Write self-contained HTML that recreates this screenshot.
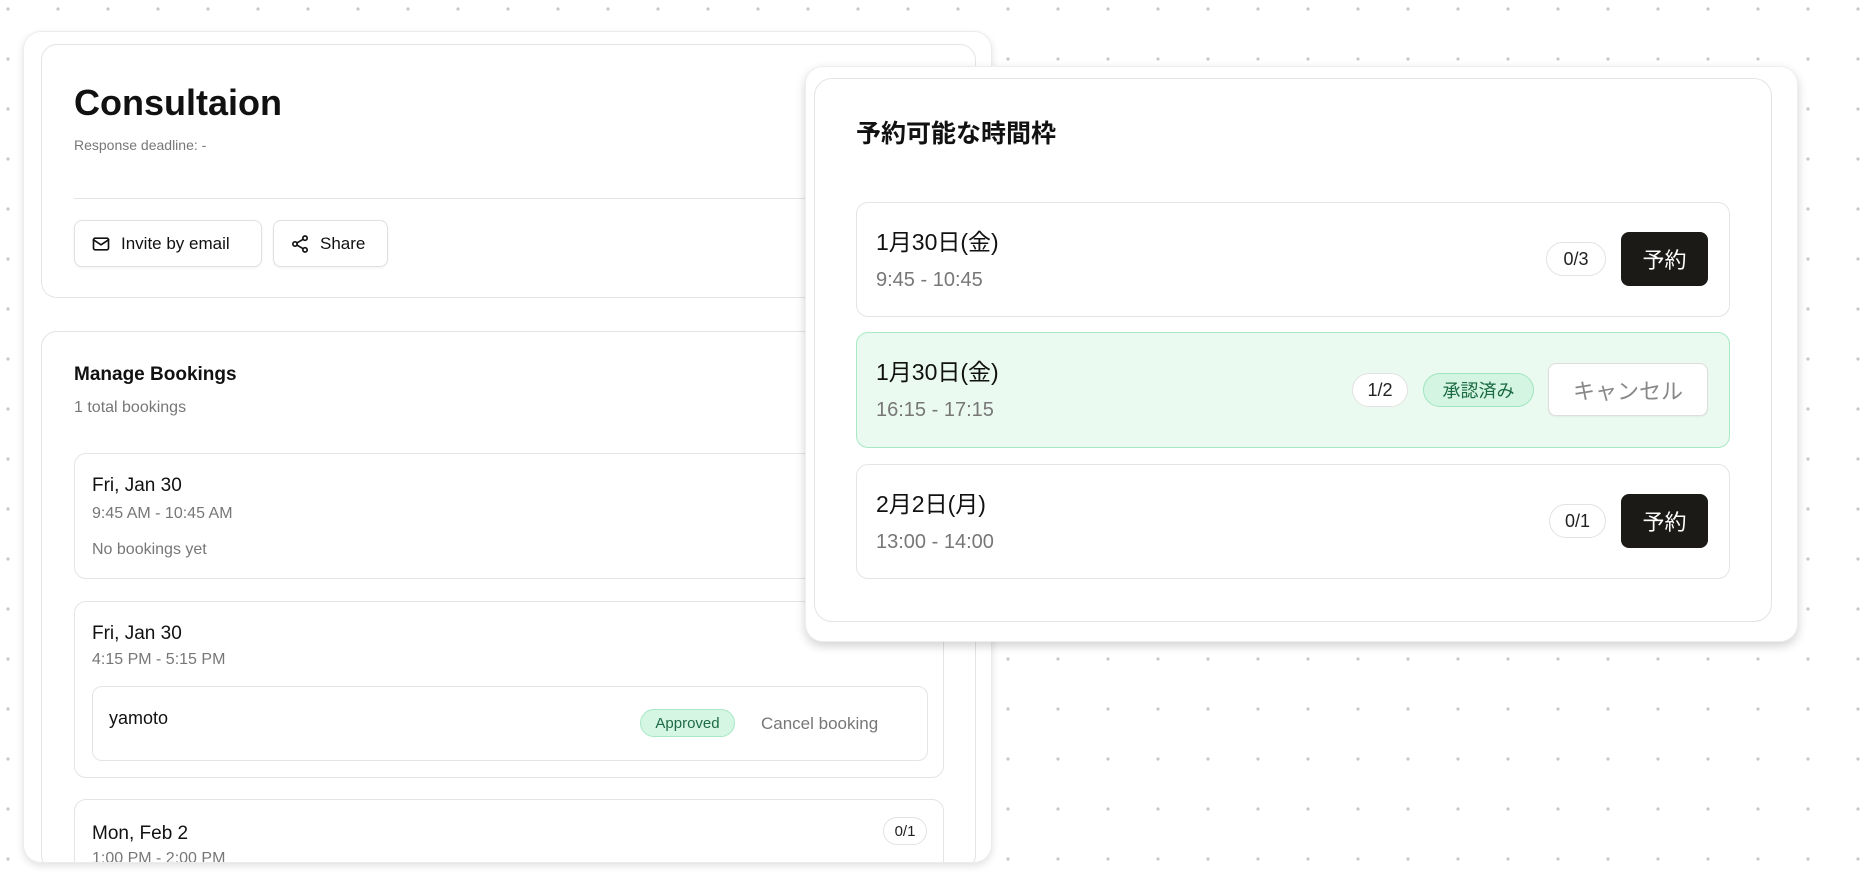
<!DOCTYPE html>
<html style="width:1860px;height:896px;overflow:hidden"><head><meta charset="utf-8"><style>
*{box-sizing:border-box;margin:0;padding:0}
body{width:1860px;height:896px;overflow:hidden;background:#fff;font-family:"Liberation Sans","Noto Sans CJK JP",sans-serif;position:relative;
background-image:radial-gradient(circle,#c9c9c9 1.4px,transparent 1.9px);background-size:50px 50px;background-position:-17px -16px}
.abs{position:absolute}
.outer{left:23px;top:31px;width:969px;height:832px;background:#fff;border:1px solid #ececec;border-radius:18px;box-shadow:0 3px 8px rgba(0,0,0,.12);overflow:hidden}
.card{position:absolute;background:#fff;border:1px solid #e4e4e4;border-radius:16px}
.t{position:absolute;white-space:nowrap;line-height:1}
.gray{color:#777}
.btn{position:absolute;border:1px solid #e0e0e0;border-radius:8px;background:#fff;box-shadow:0 1px 2px rgba(0,0,0,.06);display:flex;align-items:center;font-size:17px;color:#111}
.badge{position:absolute;border:1px solid #e2e2e2;border-radius:18px;background:#fff;display:flex;align-items:center;justify-content:center;color:#222}
.book{position:absolute;left:1621px;width:87px;height:54px;background:#1c1a17;border-radius:8px;color:#fff;font-size:22px;display:flex;align-items:center;justify-content:center}
</style></head><body>
<div class="abs outer">
  <div class="card" style="left:17px;top:12px;width:935px;height:254px">
    <div class="t" style="left:32px;top:40px;font-size:36px;font-weight:bold;color:#111">Consultaion</div>
    <div class="t gray" style="left:32px;top:93px;font-size:14px">Response deadline: -</div>
    <div class="abs" style="left:32px;top:153px;width:900px;height:1px;background:#e4e4e4"></div>
    <div class="btn" style="left:32px;top:175px;width:188px;height:47px;padding-left:16px">
      <svg width="20" height="20" viewBox="0 0 24 24" fill="none" stroke="#111" stroke-width="2" stroke-linecap="round" stroke-linejoin="round"><rect x="3" y="5" width="18" height="14" rx="2"/><path d="M3 7l9 6 9-6"/></svg>
      <span style="margin-left:10px">Invite by email</span></div>
    <div class="btn" style="left:231px;top:175px;width:115px;height:47px;padding-left:16px">
      <svg width="20" height="20" viewBox="0 0 24 24" fill="none" stroke="#111" stroke-width="2" stroke-linecap="round"><circle cx="18" cy="5" r="2.6"/><circle cx="6" cy="12" r="2.6"/><circle cx="18" cy="19" r="2.6"/><path d="M8.3 10.7l7.4-4.3M8.3 13.3l7.4 4.3"/></svg>
      <span style="margin-left:10px">Share</span></div>
  </div>
  <div class="card" style="left:17px;top:299px;width:935px;height:540px;overflow:hidden">
    <div class="t" style="left:32px;top:33px;font-size:19px;font-weight:bold;color:#111">Manage Bookings</div>
    <div class="t gray" style="left:32px;top:68px;font-size:16px">1 total bookings</div>
    <div class="card" style="left:32px;top:121px;width:870px;height:126px;border-radius:12px">
      <div class="t" style="left:17px;top:22px;font-size:19px;color:#111">Fri, Jan 30</div>
      <div class="t gray" style="left:17px;top:52px;font-size:16px">9:45 AM - 10:45 AM</div>
      <div class="t gray" style="left:17px;top:88px;font-size:16px">No bookings yet</div>
    </div>
    <div class="card" style="left:32px;top:269px;width:870px;height:177px;border-radius:12px">
      <div class="t" style="left:17px;top:22px;font-size:19px;color:#111">Fri, Jan 30</div>
      <div class="t gray" style="left:17px;top:50px;font-size:16px">4:15 PM - 5:15 PM</div>
      <div class="card" style="left:17px;top:84px;width:836px;height:75px;border-radius:10px">
        <div class="t" style="left:16px;top:22px;font-size:18px;color:#111">yamoto</div>
        <div class="abs" style="left:547px;top:22px;width:95px;height:28px;border-radius:14px;background:#d4f6e3;border:1px solid #a8e8c4;color:#1f6b45;font-size:15px;display:flex;align-items:center;justify-content:center">Approved</div>
        <div class="t gray" style="left:668px;top:28px;font-size:17px">Cancel booking</div>
      </div>
    </div>
    <div class="card" style="left:32px;top:467px;width:870px;height:100px;border-radius:12px">
      <div class="t" style="left:17px;top:24px;font-size:19px;color:#111">Mon, Feb 2</div>
      <div class="t gray" style="left:17px;top:51px;font-size:16px">1:00 PM - 2:00 PM</div>
      <div class="badge" style="left:808px;top:17px;width:44px;height:28px;font-size:15px">0/1</div>
    </div>
  </div>
</div>

<div class="abs" style="left:805px;top:66px;width:993px;height:576px;background:#fff;border-radius:18px;box-shadow:0 4px 10px rgba(0,0,0,.18);border:1px solid #eee"></div>
<div class="card" style="left:814px;top:78px;width:958px;height:544px;border-radius:18px"></div>
<div class="t" style="left:856px;top:122px;font-size:25px;font-weight:bold;color:#111">予約可能な時間枠</div>

<div class="card" style="left:856px;top:202px;width:874px;height:115px;border-radius:12px"></div>
<div class="t" style="left:876px;top:231px;font-size:23px;color:#111">1月30日(金)</div>
<div class="t gray" style="left:876px;top:270px;font-size:20px">9:45 - 10:45</div>
<div class="badge" style="left:1546px;top:242px;width:60px;height:34px;font-size:18px">0/3</div>
<div class="book" style="top:232px">予約</div>

<div class="card" style="left:856px;top:332px;width:874px;height:116px;border-radius:12px;background:#ebfaf0;border-color:#a7e9c4"></div>
<div class="t" style="left:876px;top:361px;font-size:23px;color:#111">1月30日(金)</div>
<div class="t gray" style="left:876px;top:400px;font-size:20px">16:15 - 17:15</div>
<div class="badge" style="left:1352px;top:373px;width:56px;height:34px;font-size:18px">1/2</div>
<div class="badge" style="left:1423px;top:373px;width:111px;height:34px;font-size:18px;background:#d3f5e1;border-color:#9fe5be;color:#1c6b43">承認済み</div>
<div class="abs" style="left:1548px;top:363px;width:160px;height:53px;background:#fff;border:1px solid #ddd;border-radius:8px;box-shadow:0 1px 2px rgba(0,0,0,.06);color:#888;font-size:22px;display:flex;align-items:center;justify-content:center">キャンセル</div>

<div class="card" style="left:856px;top:464px;width:874px;height:115px;border-radius:12px"></div>
<div class="t" style="left:876px;top:493px;font-size:23px;color:#111">2月2日(月)</div>
<div class="t gray" style="left:876px;top:532px;font-size:20px">13:00 - 14:00</div>
<div class="badge" style="left:1549px;top:504px;width:57px;height:34px;font-size:18px">0/1</div>
<div class="book" style="top:494px">予約</div>
</body></html>
